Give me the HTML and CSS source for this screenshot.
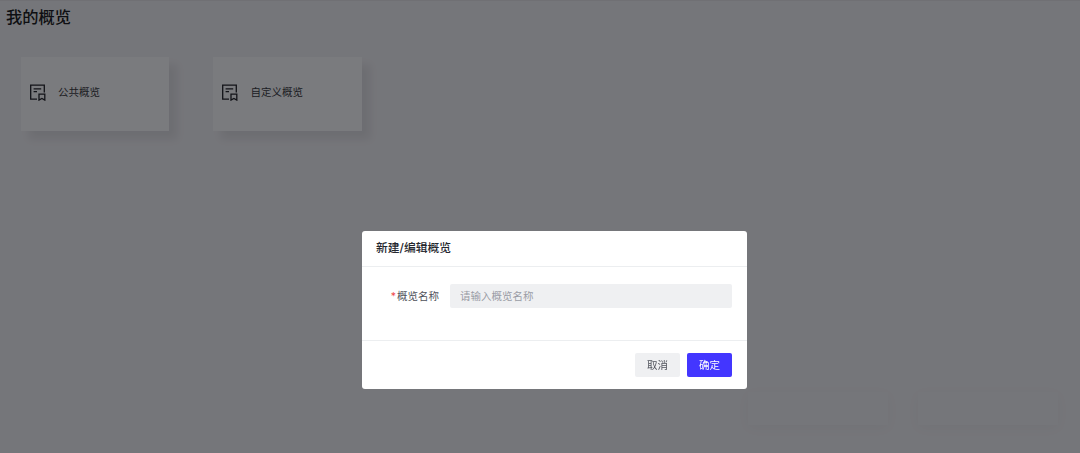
FILE: index.html
```html
<!DOCTYPE html>
<html lang="zh-CN">
    <head>
        <meta charset="utf-8" />
        <title>我的概览</title>
        <link rel="stylesheet" href="styles.css">
    </head>
    <body>
        <div class="page">
            <h1 class="page-title">我的概览</h1>
            <div class="cards">
                <div class="card">
                    <svg class="card-icon" viewBox="0 0 16 16" width="16" height="17" fill="none" stroke="currentColor" stroke-width="1.3">
                        <path d="M7 14.7H.7V.7h13.6v7.4"/>
                        <path d="M3.6 4.3h7.6M3.6 7.2h3.4"/>
                        <path d="M9 15.6V9.6h5.8v6l-2.9-1.6z"/>
                    </svg>
                    <span class="card-label">公共概览</span>
                </div>
                <div class="card">
                    <svg class="card-icon" viewBox="0 0 16 16" width="16" height="17" fill="none" stroke="currentColor" stroke-width="1.3">
                        <path d="M7 14.7H.7V.7h13.6v7.4"/>
                        <path d="M3.6 4.3h7.6M3.6 7.2h3.4"/>
                        <path d="M9 15.6V9.6h5.8v6l-2.9-1.6z"/>
                    </svg>
                    <span class="card-label">自定义概览</span>
                </div>
            </div>
            <div class="ghost-row">
                <div class="ghost"></div>
                <div class="ghost"></div>
            </div>
        </div>

        <div class="mask">
            <div class="modal">
                <div class="modal-head">新建/编辑概览</div>
                <div class="modal-body">
                    <label class="field-label"><span class="required">*</span>概览名称</label>
                    <input class="field-input" type="text" placeholder="请输入概览名称">
                </div>
                <div class="modal-foot">
                    <button class="btn">取消</button>
                    <button class="btn btn-primary">确定</button>
                </div>
            </div>
        </div>
    </body>
</html>
```

FILE: styles.css
```css
html, body {
    height: 100%;
}

body {
    margin: 0;
    overflow: hidden;
    background-color: #ebecf2;
    font-family: "Inter", "Noto Sans CJK SC", sans-serif;
}

.page {
    height: 453px;
    box-sizing: border-box;
    padding-top: 7px;
    border-top: 1px solid #e0e1e6;
    display: flex;
    flex-direction: column;
}

.page-title {
    margin: 0 0 0 6px;
    font-size: 16.25px;
    line-height: 19px;
    font-weight: 500;
    color: #1d1f26;
}

.cards {
    display: flex;
    gap: 44px;
    margin: 30px 0 0 21px;
}

.card {
    width: 148.4px;
    height: 74px;
    box-sizing: border-box;
    padding-bottom: 3px;
    display: flex;
    align-items: center;
    background-color: #f4f6fa;
    box-shadow: 8px 8px 8px rgba(20, 22, 40, 0.08);
}

.card-icon {
    margin-left: 9px;
    color: #24262e;
}

.card-label {
    margin-left: 12px;
    font-size: 10.5px;
    line-height: 14px;
    color: #3a3c45;
}

.ghost-row {
    display: flex;
    gap: 30px;
    margin: 261px 0 0 748px;
}

.ghost {
    width: 140px;
    height: 33px;
    box-shadow: 0 3px 14px rgba(20, 22, 40, 0.03);
}

.mask {
    position: fixed;
    top: 0;
    left: 0;
    right: 0;
    bottom: 0;
    background-color: rgba(0, 0, 2, 0.5);
}

.modal {
    position: absolute;
    left: 361.5px;
    top: 231px;
    width: 385px;
    height: 157.5px;
    display: flex;
    flex-direction: column;
    background-color: #ffffff;
    border-radius: 3px;
}

.modal-head {
    height: 34.5px;
    padding-left: 14.5px;
    line-height: 34px;
    font-size: 11.8px;
    font-weight: 500;
    color: #25272e;
    border-bottom: 1px solid #eceef0;
}

.modal-body {
    flex: 1;
    display: flex;
    align-items: flex-start;
    padding-top: 17.5px;
    border-bottom: 1px solid #eceef0;
}

.field-label {
    width: 77.5px;
    text-align: right;
    font-size: 10.5px;
    line-height: 26px;
    height: 24px;
    color: #50525b;
}

.required {
    margin-right: 1px;
    color: #f04848;
}

.field-input {
    width: 282px;
    height: 24px;
    box-sizing: border-box;
    margin-left: 11px;
    padding: 0 10px;
    border: none;
    border-radius: 2px;
    outline: none;
    background-color: #eff0f2;
    font-family: inherit;
    font-size: 10.5px;
}

.field-input::placeholder {
    color: #9a9ca5;
}

.modal-foot {
    height: 48px;
    flex: none;
    display: flex;
    justify-content: flex-end;
    align-items: flex-start;
    gap: 7px;
    padding: 12.5px 14.5px 0 0;
    box-sizing: border-box;
}

.btn {
    width: 45px;
    height: 24px;
    padding: 0 0 2px;
    border: none;
    border-radius: 2px;
    background-color: #eff0f2;
    font-family: inherit;
    font-size: 10.5px;
    color: #50525b;
}

.btn-primary {
    background-color: #4336ff;
    color: #ffffff;
}
```
